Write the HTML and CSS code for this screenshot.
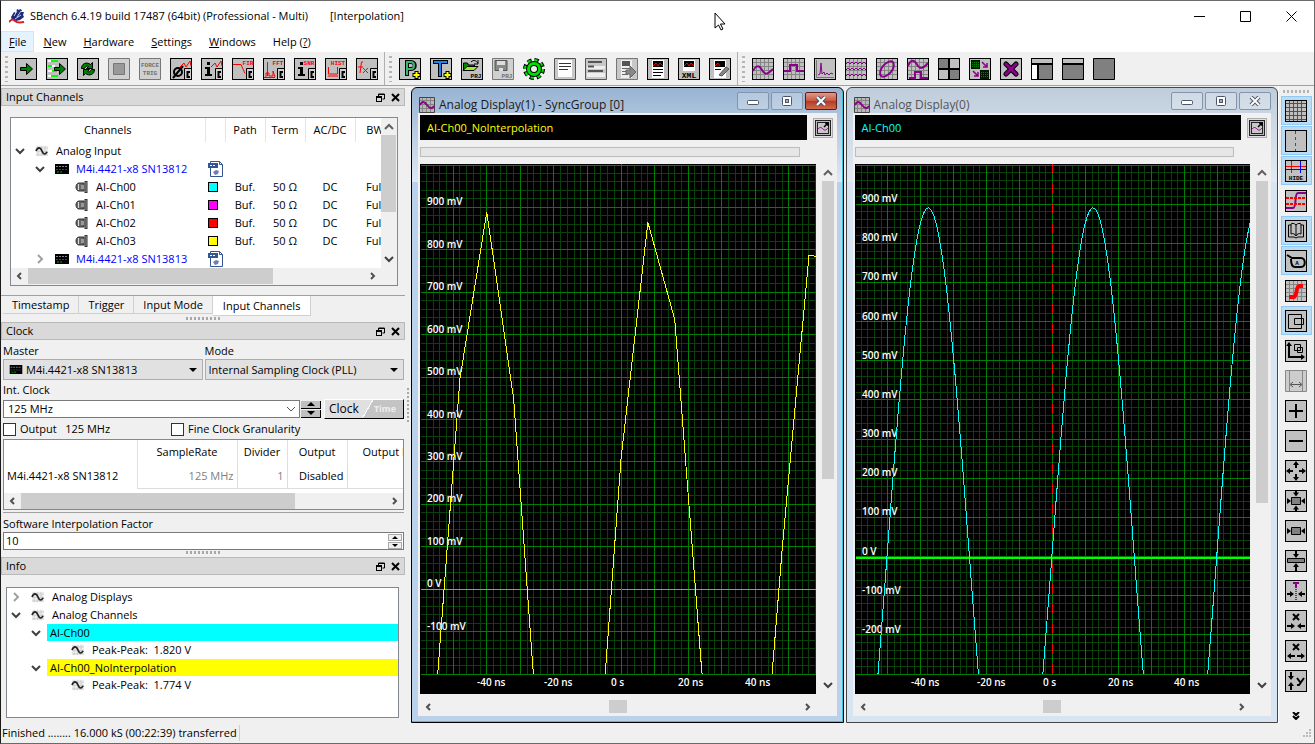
FILE: index.html
```html
<!DOCTYPE html>
<html lang="en">
<head>
    <meta charset="utf-8">
    <meta name="viewport" content="width=device-width, initial-scale=1">
    <title>SBench 6.4.19</title>
    <link rel="stylesheet" href="styles.css">
</head>

<body>
    <!-- Shared icon symbols -->
    <svg class="sprite" aria-hidden="true">
        <symbol id="box" viewBox="0 0 22 22"><rect x=".5" y=".5" width="21" height="21" fill="#c0c0c0" stroke="#000"/></symbol>
        <symbol id="gridbox" viewBox="0 0 22 22"><rect x=".5" y=".5" width="21" height="21" fill="#c0c0c0" stroke="#000"/><path d="M4.500 1v20M8.500 1v20M12.500 1v20M16.500 1v20M1 4.500h20M1 8.500h20M1 12.500h20M1 16.500h20" stroke="#858585" fill="none"/></symbol>
        <symbol id="calc" viewBox="0 0 22 22"><rect x="14" y="11" width="7" height="10" fill="#d0d0d0"/><path d="M14.500 21v-10.500h6.500" stroke="#000" fill="none"/><path d="M20 14h-2.500v5H20" stroke="#000" stroke-width="2" fill="none"/></symbol>
        <symbol id="info" viewBox="0 0 22 22"><path d="M6 4h3v3H6zM4 9h5v7h2v2H4v-2h2v-5H4z" fill="#000"/></symbol>
        <symbol id="wave" viewBox="0 0 16 14"><rect width="14" height="12" x="1" y="1" fill="#eee"/><path d="M3.500 1v12M7.500 1v12M11.500 1v12M1 3.500h14M1 7.500h14M1 11.500h14" stroke="#ccc"/><path d="M1 7c2-5 5-5 7 0s4 4 6 1" fill="none" stroke="#222" stroke-width="2"/></symbol>
        <symbol id="card" viewBox="0 0 14 10"><rect width="14" height="10" y="0" fill="#000"/><path d="M1 2.500h12" stroke="#888" stroke-dasharray="2 1"/><path d="M1 5.500h12" stroke="#444" stroke-dasharray="2 1"/><path d="M2 8h6" stroke="#0a0" stroke-dasharray="2 1"/></symbol>
        <symbol id="bnc" viewBox="0 0 14 12"><path d="M9 2H4C0 2 0 10 4 10h5z" fill="#666" stroke="#333"/><path d="M3.500 3v6" stroke="#ddd"/><path d="M6 4h3v4H6z" fill="#999"/><rect x="10" y="0.500" width="2" height="11" fill="#999" stroke="#333"/></symbol>
        <symbol id="doc" viewBox="0 0 16 16"><path d="M2.500.5h9l3 3v12h-12z" fill="#fff" stroke="#345591"/><path d="M11.500.5v3h3" fill="none" stroke="#345591"/><rect x="0" y="2" width="10" height="5" fill="#345591"/><path d="M2 4.500h6" stroke="#fff" stroke-dasharray="2 1"/><path d="M5 11l3-2 3 1-1 3-3 1z" fill="#6b7fb5"/></symbol>
        <symbol id="down" viewBox="0 0 10 10"><path d="M1 3l4 4 4-4" fill="none" stroke="#404040" stroke-width="2"/></symbol>
        <symbol id="up" viewBox="0 0 10 10"><path d="M1 7l4-4 4 4" fill="none" stroke="#606060" stroke-width="2"/></symbol>
        <symbol id="left" viewBox="0 0 10 10"><path d="M7 2L4 5l3 3" fill="none" stroke="#505050" stroke-width="2"/></symbol>
        <symbol id="right" viewBox="0 0 10 10"><path d="M3 2l3 3-3 3" fill="none" stroke="#505050" stroke-width="2"/></symbol>
        <symbol id="closed" viewBox="0 0 10 10"><path d="M3 1l4 4-4 4" fill="none" stroke="#a0a0a0" stroke-width="2"/></symbol>
        <symbol id="tri" viewBox="0 0 8 4"><path d="M0 0h8L4 4z" fill="#000"/></symbol>
        <symbol id="triup" viewBox="0 0 8 4"><path d="M0 4h8L4 0z" fill="#000"/></symbol>
        <symbol id="float" viewBox="0 0 9 9"><path d="M2.500 3V1h6v5h-2M2.500 1.500h6" fill="none" stroke="#000"/><rect x=".5" y="3.500" width="5" height="5" fill="none" stroke="#000"/><path d="M0 4h6" stroke="#000" stroke-width="2"/></symbol>
        <symbol id="cross" viewBox="0 0 9 9"><path d="M1 1l7 7M8 1L1 8" stroke="#000" stroke-width="2"/></symbol>
        <symbol id="sine" viewBox="0 0 16 16"><rect width="16" height="16" fill="#b8b8b8"/><path d="M3.500 0v16M7.500 0v16M11.500 0v16M0 3.500h16M0 7.500h16M0 11.500h16" stroke="#858585"/><path d="M.5.5h15v15H.5z" fill="none" stroke="#444"/><path d="M1 8c2-4 4-4 7 0s5 4 7 1" fill="none" stroke="#8b008b" stroke-width="2"/></symbol>
        <symbol id="export" viewBox="0 0 16 16"><rect x=".5" y=".5" width="15" height="15" fill="#bbb" stroke="#222"/><rect x="2.500" y="2.500" width="11" height="11" fill="#c8c8c8" stroke="#222"/><path d="M3 9c2-2 3-2 5 0s3 1 5-1" fill="none" stroke="#8b008b"/><path d="M9 7l4-4M10 3h3v3" fill="none" stroke="#000" stroke-width="1.500"/></symbol>
        <symbol id="min" viewBox="0 0 12 10"><rect x=".5" y="4.500" width="11" height="4" rx="1" fill="#fff" stroke="#4d5568"/></symbol>
        <symbol id="max" viewBox="0 0 12 10"><rect x="1.500" y=".5" width="9" height="9" rx="1" fill="#fff" stroke="#4d5568"/><rect x="4.500" y="3.500" width="3" height="3" fill="#aac" stroke="#4d5568"/></symbol>
        <symbol id="shut" viewBox="0 0 12 10"><path d="M2 1l8 8M10 1L2 9" stroke="#4d5568" stroke-width="4"/><path d="M2 1l8 8M10 1L2 9" stroke="#fff" stroke-width="2"/></symbol>
    </svg>

    <header class="titlebar">
        <svg class="logo" viewBox="0 0 16 16"><path d="M2 9l3-5 2 1 1-4 2 1 1-1 2 1-1 2 3 0-1 3 1 2-4 3-4 1-4-1z" fill="#1d2a7c"/><path d="M5 8l3-5M8 9l4-6M6 11l6-4" stroke="#c9cfee" stroke-width="1"/><path d="M0 14c3-3 4-3 6-1s4 2 9 1" stroke="#e02020" stroke-width="2" fill="none"/></svg>
        <span class="app-name">SBench 6.4.19 build 17487 (64bit) (Professional - Multi)</span>
        <span>[Interpolation]</span>
        <div class="window-buttons">
            <button aria-label="Minimize"><svg viewBox="0 0 11 11"><path d="M0 5.500h11" stroke="#000"/></svg></button>
            <button aria-label="Maximize"><svg viewBox="0 0 11 11"><path d="M.5.5h10v10H.5z" stroke="#000" fill="none"/></svg></button>
            <button aria-label="Close"><svg viewBox="0 0 11 11"><path d="M.5.5l10 10M10.500.5L.5 10.500" stroke="#000"/></svg></button>
        </div>
        <svg class="pointer" viewBox="0 0 12 19"><path d="M1 1v15l3.500-3 2.500 5 2-1-2.500-5H11z" fill="#fff" stroke="#000"/></svg>
    </header>

    <nav class="menubar">
        <a href="#" class="active"><u>F</u>ile</a>
        <a href="#"><u>N</u>ew</a>
        <a href="#"><u>H</u>ardware</a>
        <a href="#"><u>S</u>ettings</a>
        <a href="#"><u>W</u>indows</a>
        <a href="#">Help (<u>?</u>)</a>
    </nav>

    <div class="toolbars">
        <div class="toolbar">
            <button aria-label="Start"><svg viewBox="0 0 22 22"><use href="#box"/><path d="M5.500 9.500h6v-4l6 5.500-6 5.500v-4h-6z" fill="#008000" stroke="#000"/></svg></button>
            <button aria-label="Start loop"><svg viewBox="0 0 22 22"><use href="#box"/><path d="M2 3h7M2 8h7M2 13h7M2 18h7" stroke="#fff" stroke-width="2"/><path d="M5 3h7M2 8h4M6 13h5M5 18h7" stroke="#0f0" stroke-width="2"/><path d="M8.500 9.500h5v-4l6 5.500-6 5.500v-4h-5z" fill="#008000" stroke="#000"/></svg></button>
            <button aria-label="Repeat"><svg viewBox="0 0 22 22"><use href="#box"/><path d="M4.500 10.500c0-5 5-7 9-4l2-2v6h-6l2-2c-2-1-3 0-4 2z" fill="#008000" stroke="#000"/><path d="M17.500 11.500c0 5-5 7-9 4l-2 2v-6h6l-2 2c2 1 3 0 4-2z" fill="#008000" stroke="#000"/></svg></button>
            <button aria-label="Stop" disabled><svg viewBox="0 0 22 22"><path d="M.5.5h21v21H.5z" fill="#d0d0d0" stroke="#777"/><path d="M5.500 5.500h11v11h-11z" fill="#999" stroke="#777"/></svg></button>
            <button aria-label="Force trigger" disabled><svg viewBox="0 0 22 22"><path d="M.5.5h21v21H.5z" fill="#d0d0d0" stroke="#777"/><text x="11" y="9" class="tiny gray">FORCE</text><text x="11" y="17" class="tiny gray">TRIG</text></svg></button>
            <button aria-label="Zero"><svg viewBox="0 0 22 22"><use href="#box"/><path d="M10 9l4-4 2 4 4-6 1 5" fill="none" stroke="#f00"/><circle cx="8" cy="14" r="4" fill="none" stroke="#000" stroke-width="2"/><path d="M3 20L13 8" stroke="#000" stroke-width="2"/><use href="#calc"/></svg></button>
            <button aria-label="Information"><svg viewBox="0 0 22 22"><use href="#box"/><path d="M10 9l4-4 2 4 4-6 1 5" fill="none" stroke="#f00"/><use href="#info"/><use href="#calc"/></svg></button>
            <button aria-label="FIR"><svg viewBox="0 0 22 22"><use href="#box"/><path d="M1 6.500h8l4 9" fill="none" stroke="#f00"/><text x="16" y="7" class="tiny red-text">FIR</text><use href="#calc"/></svg></button>
            <button aria-label="FFT"><svg viewBox="0 0 22 22"><use href="#box"/><path d="M4.500 4v14M3 19v-4h3v3h4v-5l2 6M1 19.500h11" fill="none" stroke="#f00"/><text x="15" y="7" class="tiny red-text">FFT</text><use href="#calc"/></svg></button>
            <button aria-label="SNR"><svg viewBox="0 0 22 22"><use href="#box"/><use href="#info"/><text x="15" y="7" class="tiny red-text">SNR</text><use href="#calc"/></svg></button>
            <button aria-label="Histogram"><svg viewBox="0 0 22 22"><use href="#box"/><path d="M3.500 9v7h9V9M3 18h10" fill="none" stroke="#f00"/><text x="13" y="7" class="tiny red-text">HIST</text><use href="#calc"/></svg></button>
            <button aria-label="Function"><svg viewBox="0 0 22 22"><use href="#box"/><path d="M7 4H5.500L4 15M2 9h5M7 10l5 5M12 10l-5 5" fill="none" stroke="#f00"/><use href="#calc"/></svg></button>
        </div>
        <div class="toolbar">
            <button aria-label="Project"><svg viewBox="0 0 22 22"><use href="#box"/><path d="M8 18V4h4c5 0 5 7 0 7H8" fill="none" stroke="#000" stroke-width="4"/><path d="M8 17V4h4c4 0 4 7 0 7H8" fill="none" stroke="#3cb371" stroke-width="2"/><path d="M17.500 13v8M13.500 17h8" stroke="#000" stroke-width="4"/><path d="M17.500 14v6M14.500 17h6" stroke="#ff0" stroke-width="2"/></svg></button>
            <button aria-label="Template"><svg viewBox="0 0 22 22"><use href="#box"/><path d="M3 4h15M10 4v15" fill="none" stroke="#000" stroke-width="4"/><path d="M4 4h13M10 4v14" fill="none" stroke="#1c86ee" stroke-width="2"/><path d="M17.500 13v8M13.500 17h8" stroke="#000" stroke-width="4"/><path d="M17.500 14v6M14.500 17h6" stroke="#ff0" stroke-width="2"/></svg></button>
            <button aria-label="Open project"><svg viewBox="0 0 22 22"><use href="#box"/><path d="M2.500 12V5h4l1 2h6v2" fill="#080" stroke="#000"/><path d="M2 12.500l4-4h11l-4 4z" fill="#9e3" stroke="#000"/><path d="M10 4c3-3 5-1 7 1M17 2v4h-4" stroke="#000" fill="none"/><text x="15" y="20" class="tiny">PRJ</text></svg></button>
            <button aria-label="Save project" disabled><svg viewBox="0 0 22 22"><path d="M.5.5h21v21H.5z" fill="#d0d0d0" stroke="#777"/><path d="M3 2.500h12v10H3z" fill="#888" stroke="#555"/><path d="M5 3h8v4H5z" fill="#ddd"/><path d="M7 10h4v3H7z" fill="#ddd"/><text x="15" y="20" class="tiny gray">PRJ</text></svg></button>
            <button aria-label="Settings"><svg viewBox="0 0 22 22"><circle cx="11" cy="11" r="8.500" fill="none" stroke="#000" stroke-width="5" stroke-dasharray="4 2.700"/><circle cx="11" cy="11" r="8" fill="none" stroke="#0d0" stroke-width="4" stroke-dasharray="3 3.280"/><circle cx="11" cy="11" r="5.500" fill="none" stroke="#000" stroke-width="5"/><circle cx="11" cy="11" r="5.500" fill="none" stroke="#0d0" stroke-width="3"/></svg></button>
            <button aria-label="Page"><svg viewBox="0 0 22 22"><path d="M.5.5h21v21H.5z" fill="#c8c8c8" stroke="#555"/><path d="M4 2h14v17H4z" fill="#fff"/><path d="M5 5.500h12M5 8.500h12M5 11.500h9" stroke="#333"/></svg></button>
            <button aria-label="List"><svg viewBox="0 0 22 22"><path d="M.5.5h21v21H.5z" fill="#c8c8c8" stroke="#555"/><path d="M2 8h18v3H2zM2 15h18v4H2z" fill="#eee"/><path d="M3 4h14M3 8.500h6M3 13h15" stroke="#555" stroke-width="2"/></svg></button>
            <button aria-label="Export report" disabled><svg viewBox="0 0 22 22"><path d="M.5.5h21v21H.5z" fill="#c8c8c8" stroke="#777"/><path d="M5 2h11v18H5z" fill="#eee"/><path d="M6 3h8v5H6z" fill="#555"/><path d="M6 10.500h8M6 13.500h8M6 16.500h6" stroke="#666"/><path d="M10 12h4V8l6 6-6 6v-4h-4z" fill="#888" stroke="#666"/></svg></button>
            <button aria-label="Report"><svg viewBox="0 0 22 22"><use href="#box"/><path d="M5 2h12v18H5z" fill="#fff"/><path d="M6 3h10v6H6z" fill="#000"/><path d="M6 8l3-3 2 3 2-3 3 3" stroke="#f00" fill="none"/><path d="M6 11.500h10M6 14.500h10M6 17.500h8" stroke="#000"/></svg></button>
            <button aria-label="XML"><svg viewBox="0 0 22 22"><use href="#box"/><path d="M5 2h12v11H5z" fill="#fff"/><path d="M6 3h10v6H6z" fill="#000"/><path d="M6 8l3-3 2 3 2-3 3 3" stroke="#f00" fill="none"/><text x="11" y="20" class="xml">XML</text></svg></button>
            <button aria-label="Edit report"><svg viewBox="0 0 22 22"><use href="#box"/><path d="M5 2h12v18H5z" fill="#fff"/><path d="M6 3h10v6H6z" fill="#000"/><path d="M6 8l3-3 2 3" stroke="#f00" fill="none"/><path d="M6 11.500h6" stroke="#000"/><path d="M10 17l7-8 3 2-7 7z" fill="#888" stroke="#555"/></svg></button>
        </div>
        <div class="toolbar">
            <button aria-label="Analog display"><svg viewBox="0 0 22 22"><use href="#gridbox"/><path d="M1 13c3-6 6-6 9-1s5 5 11-1" fill="none" stroke="#8b008b" stroke-width="2"/></svg></button>
            <button aria-label="Digital display"><svg viewBox="0 0 22 22"><use href="#gridbox"/><path d="M1 13h6V7h7v6h7" fill="none" stroke="#8b008b" stroke-width="2"/></svg></button>
            <button aria-label="Spectrum display"><svg viewBox="0 0 22 22"><use href="#box"/><path d="M2.500 2v17.500H20" fill="none" stroke="#777"/><path d="M4 17l2-1 1-11 1 11 2-2 1 3 2-2 2 2 2-2 2 1" fill="none" stroke="#8b008b"/></svg></button>
            <button aria-label="Multi display"><svg viewBox="0 0 22 22"><use href="#gridbox"/><path d="M1 6l2-2 2 2 2-2 2 2 2-2 2 2 2-2 2 2 2-2 2 2M1 12l2-2 2 2 2-2 2 2 2-2 2 2 2-2 2 2 2-2 2 2M1 18l2-2 2 2 2-2 2 2 2-2 2 2 2-2 2 2 2-2 2 2" fill="none" stroke="#8b008b"/></svg></button>
            <button aria-label="XY display"><svg viewBox="0 0 22 22"><use href="#gridbox"/><ellipse cx="11" cy="11" rx="9" ry="5" transform="rotate(-50 11 11)" fill="none" stroke="#8b008b" stroke-width="2"/></svg></button>
            <button aria-label="Mixed display"><svg viewBox="0 0 22 22"><use href="#gridbox"/><path d="M1 8c3-7 6-7 10 0 2 3 5 3 10-3M2 20h6v-6h6v6h7" fill="none" stroke="#8b008b" stroke-width="2"/></svg></button>
            <button aria-label="Tile"><svg viewBox="0 0 22 22"><use href="#box"/><path d="M1 1h9v9H1zM12 12h9v9h-9z" fill="#808080"/><path d="M11 1v20M1 11h20" stroke="#000" stroke-width="2"/></svg></button>
            <button aria-label="Cascade"><svg viewBox="0 0 22 22"><use href="#box"/><path d="M2 2h9v9H2zM11 12h9v9h-9z" fill="#001800"/><path d="M3 4.500h7M3 6.500h7M3 8.500h7M12 14.500h7M12 16.500h7M12 18.500h7" stroke="#080" stroke-dasharray="1 1"/><path d="M13 4l5 5M18 5v4h-4M4 13l5 5M9 14v4H5" fill="none" stroke="#8b008b" stroke-width="1.500"/></svg></button>
            <button aria-label="Close displays"><svg viewBox="0 0 22 22"><use href="#box"/><path d="M6 6l10 10M16 6L6 16" stroke="#000" stroke-width="5" stroke-linecap="round"/><path d="M6 6l10 10M16 6L6 16" stroke="#8b008b" stroke-width="3" stroke-linecap="round"/></svg></button>
            <button aria-label="Layout left"><svg viewBox="0 0 22 22"><use href="#box"/><path d="M1 7h6v14H1z" fill="#fff"/><path d="M7 7h14v14H7z" fill="#808080"/><path d="M1 6h20M7 6v15" stroke="#000" stroke-width="2"/></svg></button>
            <button aria-label="Layout top"><svg viewBox="0 0 22 22"><use href="#box"/><path d="M1 7h20v14H1z" fill="#808080"/><path d="M1 6h20" stroke="#000" stroke-width="2"/></svg></button>
            <button aria-label="Layout full"><svg viewBox="0 0 22 22"><path d="M.5.5h21v21H.5z" fill="#808080" stroke="#000"/></svg></button>
        </div>
    </div>

    <main>
        <aside class="docks">
            <section class="dock">
                <h2>Input Channels <span class="dock-buttons"><button aria-label="Float"><svg><use href="#float"/></svg></button><button aria-label="Close"><svg><use href="#cross"/></svg></button></span></h2>
                <div class="channel-box">
                    <div class="table-view">
                        <table class="channels">
                            <colgroup><col class="c-name"><col class="c-color"><col class="c-path"><col class="c-path"><col class="c-acdc"><col class="c-path"></colgroup>
                            <thead>
                                <tr><th>Channels</th><th></th><th>Path</th><th>Term</th><th>AC/DC</th><th>BW</th></tr>
                            </thead>
                            <tbody>
                                <tr><td class="level1"><svg class="chev"><use href="#down"/></svg><svg class="ico"><use href="#wave"/></svg>Analog Input</td><td></td><td></td><td></td><td></td><td></td></tr>
                                <tr><td class="level2"><svg class="chev"><use href="#down"/></svg><svg class="ico"><use href="#card"/></svg><span class="device">M4i.4421-x8 SN13812</span></td><td><svg class="doc"><use href="#doc"/></svg></td><td></td><td></td><td></td><td></td></tr>
                                <tr><td class="level3"><svg class="ico"><use href="#bnc"/></svg>AI-Ch00</td><td><i class="swatch cyan"></i></td><td>Buf.</td><td>50 Ω</td><td>DC</td><td>Full</td></tr>
                                <tr><td class="level3"><svg class="ico"><use href="#bnc"/></svg>AI-Ch01</td><td><i class="swatch magenta"></i></td><td>Buf.</td><td>50 Ω</td><td>DC</td><td>Full</td></tr>
                                <tr><td class="level3"><svg class="ico"><use href="#bnc"/></svg>AI-Ch02</td><td><i class="swatch red"></i></td><td>Buf.</td><td>50 Ω</td><td>DC</td><td>Full</td></tr>
                                <tr><td class="level3"><svg class="ico"><use href="#bnc"/></svg>AI-Ch03</td><td><i class="swatch yellow"></i></td><td>Buf.</td><td>50 Ω</td><td>DC</td><td>Full</td></tr>
                                <tr><td class="level2"><svg class="chev"><use href="#closed"/></svg><svg class="ico"><use href="#card"/></svg><span class="device">M4i.4421-x8 SN13813</span></td><td><svg class="doc"><use href="#doc"/></svg></td><td></td><td></td><td></td><td></td></tr>
                            </tbody>
                        </table>
                    </div>
                    <div class="vscroll"><svg><use href="#up"/></svg><div class="track"><div class="thumb channels-v"></div></div><svg><use href="#down"/></svg></div>
                    <div class="hscroll"><svg><use href="#left"/></svg><div class="track"><div class="thumb channels-h"></div></div><svg><use href="#right"/></svg></div>
                </div>
                <div class="tabs">
                    <button>Timestamp</button>
                    <button>Trigger</button>
                    <button>Input Mode</button>
                    <button class="active">Input Channels</button>
                </div>
            </section>
            <div class="splitter"></div>

            <section class="dock">
                <h2>Clock <span class="dock-buttons"><button aria-label="Float"><svg><use href="#float"/></svg></button><button aria-label="Close"><svg><use href="#cross"/></svg></button></span></h2>
                <div class="clock">
                    <div class="modes">
                        <div>
                            <label for="master">Master</label>
                            <div class="combo">
                                <svg class="card"><use href="#card"/></svg>
                                <select id="master"><option>M4i.4421-x8 SN13813</option></select>
                                <svg class="arrow"><use href="#tri"/></svg>
                            </div>
                        </div>
                        <div>
                            <label for="mode">Mode</label>
                            <div class="combo">
                                <select id="mode"><option>Internal Sampling Clock (PLL)</option></select>
                                <svg class="arrow"><use href="#tri"/></svg>
                            </div>
                        </div>
                    </div>
                    <label for="intClock">Int. Clock</label>
                    <div class="rate">
                        <div class="field"><input type="text" id="intClock" value="125 MHz"><svg class="arrow-down" viewBox="0 0 10 10"><path d="M1 3l4 4 4-4" fill="none" stroke="#555"/></svg></div>
                        <div class="spin"><button aria-label="Up"><svg><use href="#triup"/></svg></button><button aria-label="Down"><svg><use href="#tri"/></svg></button></div>
                        <button class="switch"><span>Clock</span><span class="off">Time</span></button>
                    </div>
                    <div class="checks">
                        <label><input type="checkbox"> Output &nbsp; 125 MHz</label>
                        <label><input type="checkbox"> Fine Clock Granularity</label>
                    </div>
                    <div class="rates-box">
                        <div class="table-view">
                            <table class="rates">
                                <colgroup><col class="r-name"><col class="r-rate"><col class="r-div"><col class="r-out"><col class="r-freq"></colgroup>
                                <thead>
                                    <tr><th></th><th>SampleRate</th><th>Divider</th><th>Output</th><th class="freq">Output Frequency</th></tr>
                                </thead>
                                <tbody>
                                    <tr><th>M4i.4421-x8 SN13812</th><td>125 MHz</td><td>1</td><td class="enabled">Disabled</td><td></td></tr>
                                </tbody>
                            </table>
                        </div>
                        <div class="hscroll"><svg><use href="#left"/></svg><div class="track"><div class="thumb rates-h"></div></div><svg><use href="#right"/></svg></div>
                    </div>
                    <hr>
                    <label for="factor">Software Interpolation Factor</label>
                    <div class="field factor">
                        <input type="text" id="factor" value="10">
                        <div class="spin small"><button aria-label="Up"><svg><use href="#triup"/></svg></button><button aria-label="Down"><svg><use href="#tri"/></svg></button></div>
                    </div>
                </div>
            </section>
            <div class="splitter"></div>

            <section class="dock info">
                <h2>Info <span class="dock-buttons"><button aria-label="Float"><svg><use href="#float"/></svg></button><button aria-label="Close"><svg><use href="#cross"/></svg></button></span></h2>
                <ul class="info-tree">
                    <li class="level1"><svg class="chev"><use href="#closed"/></svg><svg class="ico"><use href="#wave"/></svg>Analog Displays</li>
                    <li class="level1"><svg class="chev"><use href="#down"/></svg><svg class="ico"><use href="#wave"/></svg>Analog Channels</li>
                    <li class="level2"><svg class="chev"><use href="#down"/></svg><span class="bar cyan">AI-Ch00</span></li>
                    <li class="level3"><svg class="ico"><use href="#wave"/></svg>Peak-Peak: &nbsp;1.820 V</li>
                    <li class="level2"><svg class="chev"><use href="#down"/></svg><span class="bar yellow">AI-Ch00_NoInterpolation</span></li>
                    <li class="level3"><svg class="ico"><use href="#wave"/></svg>Peak-Peak: &nbsp;1.774 V</li>
                </ul>
            </section>
        </aside>
        <div class="side-splitter"></div>

        <div class="mdi">
            <section class="display active">
                <header><svg class="sine"><use href="#sine"/></svg><span>Analog Display(1) - SyncGroup [0]</span>
                    <button aria-label="Minimize"><svg><use href="#min"/></svg></button><button aria-label="Maximize"><svg><use href="#max"/></svg></button><button class="close" aria-label="Close"><svg><use href="#shut"/></svg></button>
                </header>
                <div class="content">
                    <div class="legend"><span class="yellow-text">AI-Ch00_NoInterpolation</span><button aria-label="Export"><svg><use href="#export"/></svg></button></div>
                    <div class="progress"></div>
                    <div class="plot">
                        <svg class="chart" id="chart1"></svg>
                        <div class="vscroll"><svg><use href="#up"/></svg><div class="track"><div class="thumb plot-v1"></div></div><svg><use href="#down"/></svg></div>
                    </div>
                    <div class="hscroll"><svg><use href="#left"/></svg><div class="track"><div class="thumb plot-h"></div></div><svg><use href="#right"/></svg></div>
                </div>
            </section>
            <section class="display">
                <header><svg class="sine"><use href="#sine"/></svg><span>Analog Display(0)</span>
                    <button aria-label="Minimize"><svg><use href="#min"/></svg></button><button aria-label="Maximize"><svg><use href="#max"/></svg></button><button class="close" aria-label="Close"><svg><use href="#shut"/></svg></button>
                </header>
                <div class="content">
                    <div class="legend"><span class="cyan-text">AI-Ch00</span><button aria-label="Export"><svg><use href="#export"/></svg></button></div>
                    <div class="progress"></div>
                    <div class="plot">
                        <svg class="chart" id="chart0"></svg>
                        <div class="vscroll"><svg><use href="#up"/></svg><div class="track"><div class="thumb plot-v0"></div></div><svg><use href="#down"/></svg></div>
                    </div>
                    <div class="hscroll"><svg><use href="#left"/></svg><div class="track"><div class="thumb plot-h"></div></div><svg><use href="#right"/></svg></div>
                </div>
            </section>
        </div>

        <div class="side-toolbar">
            <button class="on" aria-label="Grid"><svg viewBox="0 0 22 22"><use href="#box"/><path d="M4.500 1v20M8.500 1v20M12.500 1v20M16.500 1v20M1 3.500h20M1 7.500h20M1 11.500h20M1 15.500h20M1 19.500h20" stroke="#080"/></svg></button>
            <button class="on" aria-label="Trigger line"><svg viewBox="0 0 22 22"><use href="#box"/><path d="M10.500 1v20" stroke="#f00" stroke-dasharray="3 3"/></svg></button>
            <button class="on" aria-label="Hide cursors"><svg viewBox="0 0 22 22"><use href="#box"/><path d="M1 6.500h20M6.500 1v12" stroke="#f00"/><path d="M1 9.500h20M15.500 1v12" stroke="#00f"/><text x="11" y="20" class="tiny">HIDE</text></svg></button>
            <button aria-label="Levels"><svg viewBox="0 0 22 22"><use href="#box"/><path d="M1 18h7c4 0 1-15 5-15h8" fill="none" stroke="#8b008b" stroke-width="2"/><path d="M1 8h20M1 14h20" stroke="#f00" stroke-width="2" stroke-dasharray="3 1"/></svg></button>
            <button class="on" aria-label="Notes"><svg viewBox="0 0 22 22"><use href="#box"/><path d="M11 5v11M11 5C9 3 7 3 6 4v10c2-1 4 0 5 2 1-2 3-3 5-2V4c-1-1-3-1-5 1M6 5H3.500v12H9l2 1 2-1h5.500V5H16" fill="none" stroke="#000"/></svg></button>
            <button class="on" aria-label="Label"><svg viewBox="0 0 22 22"><use href="#box"/><path d="M2 5l5 3h9c5 0 5 9 0 9h-6c-4 0-4-5-4-8" fill="none" stroke="#000" stroke-width="2"/><text x="12" y="15" class="tiny">A</text></svg></button>
            <button aria-label="Persistence"><svg viewBox="0 0 22 22"><use href="#gridbox"/><path d="M4 17h5c3 0 2-11 5-11h4" fill="none" stroke="#f00" stroke-width="4"/></svg></button>
            <button class="on" aria-label="Zoom area"><svg viewBox="0 0 22 22"><use href="#box"/><path d="M3.500 4.500h13v14h-13zM9.500 8.500h9v6h-9z" fill="none" stroke="#000"/></svg></button>
            <button aria-label="Axis zoom"><svg viewBox="0 0 22 22"><use href="#box"/><path d="M4 3v14h14" fill="none" stroke="#000" stroke-width="2"/><path d="M1 6l3-4 3 4zM16 14l4 3-4 3z"/><path d="M9.500 4.500h6v6h-6zM12.500 7.500h5v5h-5z" fill="none" stroke="#000"/></svg></button>
            <button disabled aria-label="Fit width"><svg viewBox="0 0 22 22"><path d="M.5.5h21v21H.5z" fill="#ccc" stroke="#888"/><path d="M4.500 1v20M17.500 1v20" stroke="#888"/><path d="M6 14.500h10M8 12l-3 2.500L8 17M14 12l3 2.500-3 2.500" fill="none" stroke="#555"/></svg></button>
            <button aria-label="Zoom in"><svg viewBox="0 0 22 22"><use href="#box"/><path d="M4 11h14M11 4v14" stroke="#000" stroke-width="2"/></svg></button>
            <button aria-label="Zoom out"><svg viewBox="0 0 22 22"><use href="#box"/><path d="M4 11h14" stroke="#000" stroke-width="2"/></svg></button>
            <button aria-label="Expand"><svg viewBox="0 0 22 22"><use href="#box"/><path d="M11 3v5M11 14v5M3 11h5M14 11h5" stroke="#000" stroke-width="2"/><path d="M8 5l3-4 3 4zM8 17l3 4 3-4zM5 8l-4 3 4 3zM17 8l4 3-4 3z"/></svg></button>
            <button aria-label="Fit all"><svg viewBox="0 0 22 22"><use href="#box"/><path d="M6.500 7.500h9v7h-9z" fill="#808080" stroke="#000"/><path d="M8 2.500l3 4 3-4zM8 19.500l3-4 3 4zM2 8l4 3-4 3zM20 8l-4 3 4 3z"/><path d="M11 1v4M11 17v4" stroke="#000" stroke-width="2"/></svg></button>
            <button aria-label="Fit horizontally"><svg viewBox="0 0 22 22"><use href="#box"/><path d="M6.500 7.500h9v7h-9z" fill="#808080" stroke="#000"/><path d="M2 8l4 3-4 3zM20 8l-4 3 4 3z"/></svg></button>
            <button aria-label="Fit vertically"><svg viewBox="0 0 22 22"><use href="#box"/><path d="M2.500 8.500h17v4h-17z" fill="#808080" stroke="#000"/><path d="M8 4l3 4 3-4zM8 17l3-4 3 4z"/><path d="M11 1v4M11 16v5" stroke="#000" stroke-width="2"/></svg></button>
            <button aria-label="Center trigger"><svg viewBox="0 0 22 22"><use href="#box"/><path d="M8 3h6M11 3v5" stroke="#8b008b" stroke-width="2"/><path d="M11 9v12" stroke="#f00" stroke-width="2" stroke-dasharray="1 1"/><path d="M2 14h4M16 14h4" stroke="#000" stroke-width="2"/><path d="M5 11l4 3-4 3zM17 11l-4 3 4 3z"/></svg></button>
            <button aria-label="Compress X"><svg viewBox="0 0 22 22"><use href="#box"/><path d="M8 4l6 6M14 4l-6 6M2 16h5M15 16h5" stroke="#000" stroke-width="2"/><path d="M6 13l4 3-4 3zM16 13l-4 3 4 3z"/></svg></button>
            <button aria-label="Stretch X"><svg viewBox="0 0 22 22"><use href="#box"/><path d="M8 4l6 6M14 4l-6 6M5 16h5M12 16h5" stroke="#000" stroke-width="2"/><path d="M6 13l-4 3 4 3zM16 13l4 3-4 3z"/></svg></button>
            <button aria-label="Compress Y"><svg viewBox="0 0 22 22"><use href="#box"/><path d="M6 2v4M6 15v5M12 8l3 4M19 8l-5 7h-2" stroke="#000" stroke-width="2" fill="none"/><path d="M3 6l3 4 3-4zM3 16l3-4 3 4z"/></svg></button>
            <svg class="more" viewBox="0 0 8 8"><path d="M1 0l3 3 3-3M1 4l3 3 3-3" fill="none" stroke="#000" stroke-width="2"/></svg>
        </div>
    </main>

    <footer>
        <span>Finished ........ 16.000 kS (00:22:39) transferred</span>
        <svg class="grip" viewBox="0 0 9 9"><path d="M6 0h2v2H6zM3 3h2v2H3zM6 3h2v2H6zM0 6h2v2H0zM3 6h2v2H3zM6 6h2v2H6z" fill="#bbb"/></svg>
    </footer>

    <script src="script.js"></script>
</body>
</html>
```

FILE: styles.css
```css
* {
    box-sizing: border-box;
}
html,
body {
    height: 100%;
}
body {
    display: flex;
    flex-direction: column;
    margin: 0;
    border: 1px solid #6a6a6a;
    border-left-color: #1a1a1a;
    background-color: #f0f0f0;
    color: #000;
    font-family: "Open Sans", "Noto Sans", sans-serif;
    font-size: 11px;
    line-height: 16px;
    overflow: hidden;
}
button,
input,
select {
    margin: 0;
    padding: 0;
    border: 0;
    background: none;
    color: inherit;
    font: inherit;
}
svg {
    display: block;
    flex: none;
}
.sprite {
    position: absolute;
    width: 0;
    height: 0;
}

/* Title bar and menu */
.titlebar {
    display: flex;
    flex: none;
    align-items: center;
    height: 30px;
    padding-left: 8px;
    background-color: #fff;
}
.logo {
    width: 16px;
    height: 16px;
    margin-right: 5px;
}
.app-name {
    margin-right: 22px;
}
.window-buttons {
    display: flex;
    margin-left: auto;
}
.window-buttons button {
    display: flex;
    align-items: center;
    justify-content: center;
    width: 46px;
    height: 28px;
}
.window-buttons svg {
    width: 11px;
    height: 11px;
}
.pointer {
    position: absolute;
    top: 12px;
    left: 714px;
    width: 12px;
    height: 19px;
}
.menubar {
    display: flex;
    flex: none;
    gap: 1px;
    height: 21px;
    background-color: #fff;
}
.menubar a {
    padding: 3px 8px;
    color: #000;
    text-decoration: none;
}
.menubar a.active {
    background-color: #e5f3ff;
    box-shadow: inset 0 0 0 1px #cce8ff;
}

/* Toolbars */
.toolbars {
    display: flex;
    flex: none;
    height: 34px;
    border-bottom: 1px solid #a0a0a0;
}
.toolbar {
    display: flex;
    align-items: center;
    gap: 9px;
    padding: 0 6px 0 4px;
    border-right: 1px solid #b0b0b0;
}
.toolbar:last-child {
    border-right: 0;
}
.toolbar::before {
    content: "";
    width: 3px;
    height: 26px;
    margin-right: -2px;
    background: repeating-linear-gradient(#b4b4b4 0 2px, transparent 2px 5px);
}
.toolbar button,
.toolbar svg {
    width: 22px;
    height: 22px;
}
.tiny {
    font: bold 6px "Liberation Mono", monospace;
    text-anchor: middle;
}
.xml {
    font: bold 8px "Liberation Mono", monospace;
    text-anchor: middle;
}
.red-text {
    fill: #f00;
}
.gray {
    fill: #707070;
}

main {
    display: flex;
    flex: 1;
    min-height: 0;
}

/* Docks */
.docks {
    display: flex;
    flex-direction: column;
    width: 404px;
    padding-top: 2px;
}
.dock h2 {
    display: flex;
    align-items: center;
    height: 18px;
    margin: 0;
    padding: 0 4px;
    border: 1px solid #b9b9b9;
    background-color: #d9d9d9;
    font-size: 11px;
    font-weight: normal;
}
.dock-buttons {
    display: flex;
    gap: 6px;
    margin-left: auto;
}
.dock-buttons svg {
    width: 9px;
    height: 9px;
}
.splitter {
    flex: none;
    width: 34px;
    height: 3px;
    margin: 1px auto 2px;
    background: repeating-linear-gradient(90deg, #a8a8a8 0 2px, transparent 2px 4px);
}
.side-splitter {
    align-self: center;
    width: 2px;
    height: 34px;
    margin: 0 2px;
    background: repeating-linear-gradient(#a8a8a8 0 2px, transparent 2px 4px);
}
.vscroll,
.hscroll {
    display: flex;
    align-items: center;
    justify-content: space-between;
    background-color: #f0f0f0;
}
.vscroll {
    flex-direction: column;
    width: 15px;
    padding: 4px 0;
}
.hscroll {
    height: 16px;
    padding: 0 3px;
}
.vscroll > svg,
.hscroll > svg {
    width: 10px;
    height: 10px;
}
.track {
    display: flex;
    flex: 1;
    align-self: stretch;
    margin: 3px 0;
}
.hscroll .track {
    margin: 0 4px;
}
.thumb {
    flex: none;
    width: 100%;
    height: 100%;
    background-color: #cdcdcd;
}
.thumb.channels-v {
    height: 66%;
}
.thumb.channels-h {
    width: 73%;
}
.thumb.rates-h {
    width: 75%;
}
.table-view {
    min-width: 0;
    overflow: hidden;
    background-color: #fff;
}
table {
    border-collapse: collapse;
    table-layout: fixed;
}
th,
td {
    padding: 0;
    font-weight: normal;
    white-space: nowrap;
    overflow: hidden;
}
.channel-box {
    display: grid;
    grid-template-columns: 1fr 16px;
    grid-template-rows: 150px 17px;
    margin: 11px 7px 9px 9px;
    border: 1px solid #828790;
    background-color: #f0f0f0;
}
.channels {
    width: 384px;
}
.channels th {
    height: 24px;
    border-right: 1px solid #e5e5e5;
    text-align: center;
}
.channels td {
    height: 18px;
    text-align: center;
}
.channels td:first-child {
    display: flex;
    align-items: center;
}
.c-name {
    width: 194px;
}
.c-color {
    width: 20px;
}
.c-path {
    width: 40px;
}
.c-acdc {
    width: 50px;
}
.chev {
    width: 10px;
    height: 10px;
    margin-right: 10px;
}
.ico {
    width: 14px;
    height: 12px;
    margin-right: 7px;
}
.channels .level1 {
    padding-left: 4px;
}
.channels .level2 {
    padding-left: 24px;
}
.channels .level3 {
    padding-left: 64px;
}
.doc {
    width: 16px;
    height: 16px;
    margin-left: 3px;
}
.device {
    color: #00f;
}
.swatch {
    display: block;
    width: 10px;
    height: 10px;
    margin-left: 3px;
    border: 1px solid #000;
}
.cyan {
    background-color: #0ff;
}
.magenta {
    background-color: #f0f;
}
.red {
    background-color: #f00;
}
.yellow {
    background-color: #ff0;
}
.tabs {
    display: flex;
    height: 21px;
    padding-left: 2px;
    border-top: 1px solid #a0a0a0;
}
.tabs button {
    height: 18px;
    padding: 0 9px;
    border: 1px solid #d0d0d0;
    border-left-width: 0;
    border-top-width: 0;
}
.tabs .active {
    height: 20px;
    padding: 0 10px;
    background-color: #fff;
}

/* Clock */
.clock {
    display: flex;
    flex-direction: column;
    padding: 3px 1px 0 2px;
}
.modes {
    display: grid;
    grid-template-columns: 1fr 1fr;
    gap: 2px;
    margin-bottom: 2px;
}
.modes label {
    display: block;
}
.combo {
    display: flex;
    align-items: center;
    height: 21px;
    padding: 0 5px 0 3px;
    border: 1px solid #adadad;
    background-color: #e1e1e1;
}
.combo .card {
    width: 14px;
    height: 9px;
    margin: 0 3px 0 2px;
}
.combo select {
    flex: 1;
    min-width: 0;
    appearance: none;
}
.arrow {
    width: 8px;
    height: 4px;
}
.rate {
    display: flex;
    align-items: center;
    height: 20px;
    margin-top: 1px;
}
.field {
    display: flex;
    align-items: center;
    height: 18px;
    border: 1px solid #7a7a7a;
    background-color: #fff;
}
.field input {
    flex: 1;
    min-width: 0;
    padding-left: 4px;
}
.field.factor input {
    padding-left: 2px;
}
.rate .field {
    flex: 1;
}
.arrow-down {
    width: 10px;
    height: 10px;
    margin-right: 3px;
}
.spin {
    display: flex;
    flex-direction: column;
    gap: 1px;
    width: 20px;
    margin: 0 3px 0 1px;
}
.spin button {
    display: flex;
    align-items: center;
    justify-content: center;
    height: 8px;
    border-right: 1px solid #000;
    border-bottom: 1px solid #000;
    background-color: #c0c0c0;
}
.spin svg {
    width: 8px;
    height: 4px;
}
.spin.small {
    width: 14px;
    margin: 0 1px 0 0;
}
.spin.small button {
    height: 7px;
    border: 1px solid #aaa;
    background-color: #f0f0f0;
}
.spin.small svg {
    width: 6px;
    height: 3px;
}
.switch {
    display: flex;
    align-items: center;
    width: 80px;
    height: 20px;
    padding-left: 4px;
    border: 1px solid #000;
    border-top-color: #fff;
    border-left-color: #fff;
    background: linear-gradient(120deg, #e0e0e0 41px, #fff 41px 42px, #c4c4c4 42px);
    font-size: 12px;
}
.switch .off {
    margin-left: auto;
    padding-right: 7px;
    color: #eee;
    font-size: 9px;
    font-weight: bold;
}
.checks {
    display: flex;
    height: 20px;
}
.checks label {
    display: flex;
    align-items: center;
    width: 168px;
}
.checks input {
    appearance: none;
    width: 13px;
    height: 13px;
    margin-right: 4px;
    border: 1px solid #333;
    background-color: #fff;
}
.rates-box {
    display: flex;
    flex-direction: column;
    height: 71px;
    border: 1px solid #828790;
    background-color: #fff;
}
.rates-box .table-view {
    flex: 1;
}
.rates {
    width: 453px;
}
.rates th {
    height: 24px;
    border-right: 1px solid #e0e0e0;
}
.rates .freq {
    padding-left: 15px;
    text-align: left;
}
.rates td {
    height: 22px;
    padding-right: 3px;
    border-right: 1px solid #ddd;
    border-bottom: 1px solid #ddd;
    color: #808080;
    text-align: right;
}
.rates tbody th {
    padding-left: 3px;
    text-align: left;
}
.rates .enabled {
    color: #000;
}
.r-name {
    width: 133px;
}
.r-rate {
    width: 100px;
}
.r-div {
    width: 50px;
}
.r-out {
    width: 60px;
}
.r-freq {
    width: 110px;
}
hr {
    width: 100%;
    margin: 2px 0 3px;
    border: 0;
    border-top: 1px solid #a0a0a0;
}

/* Info */
.info {
    display: flex;
    flex: 1;
    flex-direction: column;
    margin-top: 1px;
}
.info-tree {
    flex: 1;
    margin: 12px 6px 5px 5px;
    padding: 0;
    border: 1px solid #828790;
    background-color: #fff;
    list-style: none;
}
.info-tree li {
    display: flex;
    align-items: center;
    height: 18px;
}
.info-tree li.level2 {
    height: 17px;
}
.info-tree .level1 {
    padding-left: 4px;
}
.info-tree .level2 {
    padding-left: 24px;
}
.info-tree .level3 {
    padding-left: 64px;
}
.info-tree .level2 .chev {
    margin-right: 6px;
}
.bar {
    flex: 1;
    padding-left: 3px;
    line-height: 17px;
}

/* Display windows */
.mdi {
    display: flex;
    flex: 1;
    gap: 2px;
    min-width: 0;
    margin-top: 1px;
}
.display {
    display: flex;
    flex: 1;
    flex-direction: column;
    min-width: 0;
    padding: 0 6px 6px;
    border: 1px solid #444;
    border-radius: 6px 6px 0 0;
    background: linear-gradient(#bfcddb, #e2eaf4 94px, #d7e4f2 94px);
}
.display.active {
    border-color: #000;
    background: linear-gradient(#98b4d2, #dfe8f4 94px, #b9d1ea 94px);
    box-shadow: inset -1px -1px 0 #35c5e0;
}
.display header {
    display: flex;
    flex: none;
    align-items: center;
    gap: 2px;
    height: 25px;
    color: #555;
    font-size: 12px;
}
.display.active header {
    color: #1a1a1a;
}
.display header span {
    flex: 1;
    padding: 8px 0 0 2px;
}
.sine {
    width: 16px;
    height: 16px;
    margin: 8px 0 0 1px;
}
.display header button {
    display: flex;
    align-items: center;
    justify-content: center;
    width: 32px;
    height: 18px;
    border: 1px solid #8494ad;
    border-radius: 2px;
    background-color: rgba(255, 255, 255, .25);
}
.display header button svg {
    width: 12px;
    height: 10px;
}
.display.active .close {
    border-color: #5c1c16;
    background: linear-gradient(#dd9b8d, #c9553f 50%, #b03a24 50%, #d0694d);
}
.content {
    display: flex;
    flex: 1;
    flex-direction: column;
    min-height: 0;
    padding: 2px;
    background-color: #f0f0f0;
}
.legend {
    display: flex;
    align-items: center;
    gap: 6px;
    height: 25px;
}
.legend span {
    flex: 1;
    padding-top: 1px;
    padding-left: 7px;
    background-color: #000;
    line-height: 24px;
}
.legend button {
    width: 20px;
    height: 20px;
    margin-right: 2px;
    padding: 1px;
    border: 1px solid #adadad;
    background-color: #e1e1e1;
}
.legend svg {
    width: 16px;
    height: 16px;
}
.yellow-text {
    color: #ff0;
}
.cyan-text {
    color: #0ff;
}
.progress {
    flex: none;
    height: 10px;
    margin: 7px 35px 7px 0;
    border: 1px solid #bcbcbc;
    background-color: #e6e6e6;
}
.plot {
    display: flex;
    flex: 1;
    gap: 6px;
    min-height: 0;
}
.chart {
    flex: 1;
    min-width: 0;
    height: 100%;
    background-color: #000;
}
.chart text {
    fill: #fff;
    font-size: 10px;
    font-weight: 600;
}
.plot .vscroll {
    width: 12px;
    margin-right: 1px;
}
.content .hscroll {
    height: 13px;
    margin: 6px 19px 1px 0;
    padding: 0 3px;
}
.plot .track {
    margin: 3px 0;
}
.thumb.plot-v1 {
    height: 60%;
}
.thumb.plot-v0 {
    height: 65%;
}
.thumb.plot-h {
    width: 18px;
    margin: 0 auto;
}

/* Vertical toolbar on the right */
.side-toolbar {
    display: flex;
    flex: none;
    flex-direction: column;
    align-items: center;
    gap: 1px;
    width: 36px;
    padding-right: 1px;
    border-left: 1px solid #fff;
}
.side-toolbar::before {
    content: "";
    width: 26px;
    height: 3px;
    margin: 4px 0 2px;
    background: repeating-linear-gradient(90deg, #b4b4b4 0 2px, transparent 2px 4px);
}
.side-toolbar button {
    display: flex;
    align-items: center;
    justify-content: center;
    width: 31px;
    height: 29px;
}
.side-toolbar button.on {
    border: 1px solid #90c8f6;
    background-color: #bcdcf4;
}
.side-toolbar button svg {
    width: 22px;
    height: 22px;
}
.more {
    width: 8px;
    height: 8px;
    margin-top: 16px;
}

footer {
    display: flex;
    flex: none;
    align-items: center;
    justify-content: space-between;
    height: 20px;
    padding-right: 2px;
}
footer span {
    padding: 0 2px 0 1px;
    border-right: 1px solid #d0d0d0;
}
.grip {
    width: 9px;
    height: 9px;
}
```

FILE: script.js
```js
// Sampled signal without interpolation, [ns, mV]
const samples = [
    [-56, -345], [-48, 496], [-40, 889], [-32, 449], [-24, -435], [-16, -900],
    [-8, -553], [0, 307], [8, 865], [16, 636], [24, -187], [32, -870],
    [40, -688], [48, 92], [56, 787], [64, 778]
];

// 20 MHz sine, interpolated by a factor of 10
const interpolated = [];
for (let t = -60; t <= 61; t += 0.8) {
    interpolated.push([t, 891 * Math.cos(2 * Math.PI * (t - 12.3) / 50)]);
}

const charts = [
    { id: 'chart1', tMin: -59.6, tMax: 58.1, vMin: -200, zeroWidth: 1, color: '#ff0', data: samples },
    { id: 'chart0', tMin: -59.6, tMax: 60.2, vMin: -300, zeroWidth: 2, color: '#0ff', data: interpolated }
];

function drawChart(chart) {
    const svg = document.getElementById(chart.id);
    const width = svg.clientWidth;
    const height = svg.clientHeight;
    const bottom = height - 20;
    const x = t => 1 + (t - chart.tMin) / (chart.tMax - chart.tMin) * (width - 1);
    const y = v => 1 + (1000 - v) / (1000 - chart.vMin) * (bottom - 1);
    const snap = n => Math.floor(n) + 0.5;

    let minor = '';
    let major = '';
    let labels = '';
    for (let t = -58; t < chart.tMax; t += 2) {
        const line = `M${snap(x(t))} 1V${bottom}`;
        if (t % 10 === 0) major += line;
        else minor += line;
    }
    for (let v = chart.vMin; v <= 1000; v += 20) {
        const line = `M1 ${snap(y(v))}H${width}`;
        if (v % 100 === 0) major += line;
        else minor += line;
        if (v % 100 === 0 && v < 1000 && v > chart.vMin) {
            labels += `<text x="7" y="${Math.round(y(v)) - 2}">${v === 0 ? '0 V' : v + ' mV'}</text>`;
        }
    }
    for (let t = -40; t <= 40; t += 20) {
        labels += `<text x="${Math.round(x(t)) - 10}" y="${bottom + 12}">${t === 0 ? '0 s' : t + ' ns'}</text>`;
    }
    const points = chart.data.map(p => `${x(p[0])},${y(p[1])}`).join(' ');

    svg.innerHTML = `
        <clipPath id="${chart.id}-clip"><rect width="${width}" height="${bottom}"/></clipPath>
        <g fill="none" shape-rendering="crispEdges">
            <path d="${minor}" stroke="#0a400a"/>
            <path d="${major}" stroke="#008000"/>
            <path d="M1 ${Math.round(y(0)) + chart.zeroWidth / 2}H${width}" stroke="#00ff00" stroke-width="${chart.zeroWidth}"/>
            <line x1="${snap(x(0))}" y1="0" x2="${snap(x(0))}" y2="${bottom}" stroke="#ff0000" stroke-dasharray="10 10"/>
        </g>
        ${labels}
        <polyline points="${points}" fill="none" stroke="${chart.color}" shape-rendering="crispEdges" clip-path="url(#${chart.id}-clip)"/>`;
}

function drawAll() {
    charts.forEach(drawChart);
}

window.addEventListener('resize', drawAll);
drawAll();
```
